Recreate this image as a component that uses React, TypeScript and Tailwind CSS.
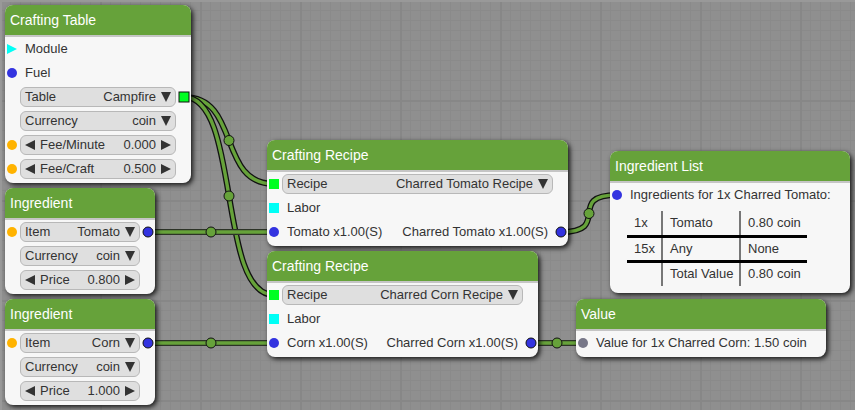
import { useId, type ReactNode } from "react";

type Shape = "circle" | "square" | "arrow";
type SlotProps = { color: string; shape?: Shape; linked?: boolean };

const BLUE = "#3333e0";
const AMBER = "#ffb300";
const LIME = "#00ff22";
const CYAN = "#00fff6";
const SLATE = "#777788";

function Slot({ slot, side }: { slot?: SlotProps; side: "in" | "out" }) {
  const cx = side === "in" ? 7 : 8;
  const stroke = slot?.linked ? "#111" : "none";
  return (
    <svg width="15" height="24" className="shrink-0" aria-hidden="true">
      {slot && (slot.shape ?? "circle") === "circle" && (
        <circle cx={cx} cy="12" r="5" fill={slot.color} stroke={stroke} />
      )}
      {slot?.shape === "square" && (
        <rect x={cx - 5} y="7" width="10" height="10" fill={slot.color} stroke={stroke} />
      )}
      {slot?.shape === "arrow" && (
        <path d={`M${cx - 5} 7L${cx + 5} 12L${cx - 5} 17Z`} fill={slot.color} />
      )}
    </svg>
  );
}

function Row({ input, output, children }: { input?: SlotProps; output?: SlotProps; children: ReactNode }) {
  return (
    <div className="flex h-6 items-center">
      <Slot slot={input} side="in" />
      <div className="flex min-w-0 flex-1 items-center">{children}</div>
      <Slot slot={output} side="out" />
    </div>
  );
}

function Labels({ left, right }: { left: string; right?: string }) {
  return (
    <div className="flex flex-1 justify-between whitespace-nowrap px-[5px]">
      <span>{left}</span>
      {right && <span>{right}</span>}
    </div>
  );
}

const box = "flex h-5 min-w-0 flex-1 items-center rounded-md border border-[#b8b8b8] bg-[#dfdfdf] px-1";

function Combo({ label, value }: { label: string; value: string }) {
  const id = useId();
  return (
    <div className={box}>
      <label htmlFor={id}>{label}</label>
      <select
        id={id}
        defaultValue={value}
        dir="rtl"
        className="mr-[5px] min-w-0 flex-1 appearance-none bg-transparent text-right outline-none"
      >
        <option>{value}</option>
      </select>
      <svg width="10" height="10" className="shrink-0 fill-[#333]" aria-hidden="true">
        <path d="M0 0H10L5 10Z" />
      </svg>
    </div>
  );
}

function NumberBox({ label, value }: { label: string; value: string }) {
  const id = useId();
  return (
    <div className={box}>
      <button type="button" aria-label={`Decrease ${label}`} className="shrink-0">
        <svg width="10" height="10" className="block fill-[#333]">
          <path d="M10 0V10L0 5Z" />
        </svg>
      </button>
      <label htmlFor={id} className="ml-[5px]">{label}</label>
      <input
        id={id}
        defaultValue={value}
        inputMode="decimal"
        className="mr-[5px] w-0 min-w-0 flex-1 bg-transparent text-right outline-none"
      />
      <button type="button" aria-label={`Increase ${label}`} className="shrink-0">
        <svg width="10" height="10" className="block fill-[#333]">
          <path d="M0 0V10L10 5Z" />
        </svg>
      </button>
    </div>
  );
}

function Node({ title, place, children }: { title: string; place: string; children: ReactNode }) {
  return (
    <section
      className={`absolute overflow-hidden rounded-lg bg-[#f7f7f7] pb-[2px] shadow-[2px_2px_5px_rgba(0,0,0,0.85)] ${place}`}
    >
      <h2 className="h-8 border-b-2 border-[#c5c5c5] bg-[#66a23a] px-[5px] text-sm leading-[30px] text-white">
        {title}
      </h2>
      {children}
    </section>
  );
}

type Point = [number, number];

const links: { from: Point; to: Point; bend: number }[] = [
  { from: [184, 97], to: [274, 184], bend: 57 },
  { from: [184, 97], to: [274, 295], bend: 57 },
  { from: [148, 232], to: [274, 232], bend: 30 },
  { from: [148, 343], to: [274, 343], bend: 30 },
  { from: [561, 232], to: [617, 195], bend: 52 },
  { from: [531, 343], to: [583, 343], bend: 12 },
];

function Links() {
  return (
    <svg className="absolute inset-0 size-full" aria-hidden="true">
      {links.map(({ from, to, bend }, i) => {
        const d = `M${from[0]} ${from[1]}C${from[0] + bend} ${from[1]} ${to[0] - bend} ${to[1]} ${to[0]} ${to[1]}`;
        const edge = from[1] === to[1] ? "#2c3327" : "#111";
        return (
          <g key={i} fill="none">
            <path d={d} stroke={edge} strokeWidth="6" />
            <path d={d} stroke="#66a23a" strokeWidth="3.4" />
            <circle
              cx={(from[0] + to[0]) / 2}
              cy={(from[1] + to[1]) / 2}
              r="5"
              fill="#66a23a"
              stroke="#111"
            />
          </g>
        );
      })}
    </svg>
  );
}

function Grid() {
  return (
    <svg className="absolute inset-0 size-full" aria-hidden="true">
      <defs>
        <pattern id="minor" width="10" height="10" patternUnits="userSpaceOnUse">
          <path d="M0 .5H10M.5 0V10" stroke="#8a8a8a" />
        </pattern>
        <pattern id="major" width="100" height="100" patternUnits="userSpaceOnUse">
          <path d="M0 1H100M1 0V100" stroke="#878787" strokeWidth="2" />
        </pattern>
      </defs>
      <rect width="100%" height="100%" fill="#8f8f8f" />
      <rect width="100%" height="100%" fill="url(#minor)" />
      <rect width="100%" height="100%" fill="url(#major)" />
      <path d="M0 0H4000V2H2V4000H0Z" fill="#999" />
    </svg>
  );
}

const cell = "h-[25px] whitespace-nowrap py-0 pr-0 pl-[7px] text-left font-normal";

export default function App() {
  return (
    <main className="relative h-screen min-h-[410px] w-full overflow-hidden bg-[#8f8f8f] font-['Liberation_Sans',Arial,sans-serif] text-[13px] leading-4 text-[#333]">
      <Grid />
      <Links />

      <Node title="Crafting Table" place="left-[5px] top-[5px] w-[186px]">
        <Row input={{ color: CYAN, shape: "arrow" }}><Labels left="Module" /></Row>
        <Row input={{ color: BLUE }}><Labels left="Fuel" /></Row>
        <Row output={{ color: LIME, shape: "square", linked: true }}><Combo label="Table" value="Campfire" /></Row>
        <Row><Combo label="Currency" value="coin" /></Row>
        <Row input={{ color: AMBER }}><NumberBox label="Fee/Minute" value="0.000" /></Row>
        <Row input={{ color: AMBER }}><NumberBox label="Fee/Craft" value="0.500" /></Row>
      </Node>

      <Node title="Ingredient" place="left-[5px] top-[188px] w-[150px]">
        <Row input={{ color: AMBER }} output={{ color: BLUE, linked: true }}><Combo label="Item" value="Tomato" /></Row>
        <Row><Combo label="Currency" value="coin" /></Row>
        <Row><NumberBox label="Price" value="0.800" /></Row>
      </Node>

      <Node title="Ingredient" place="left-[5px] top-[299px] w-[150px]">
        <Row input={{ color: AMBER }} output={{ color: BLUE, linked: true }}><Combo label="Item" value="Corn" /></Row>
        <Row><Combo label="Currency" value="coin" /></Row>
        <Row><NumberBox label="Price" value="1.000" /></Row>
      </Node>

      <Node title="Crafting Recipe" place="left-[267px] top-[140px] w-[301px]">
        <Row input={{ color: LIME, shape: "square" }}><Combo label="Recipe" value="Charred Tomato Recipe" /></Row>
        <Row input={{ color: CYAN, shape: "square" }}><Labels left="Labor" /></Row>
        <Row input={{ color: BLUE }} output={{ color: BLUE, linked: true }}>
          <Labels left="Tomato x1.00(S)" right="Charred Tomato x1.00(S)" />
        </Row>
      </Node>

      <Node title="Crafting Recipe" place="left-[267px] top-[251px] w-[271px]">
        <Row input={{ color: LIME, shape: "square" }}><Combo label="Recipe" value="Charred Corn Recipe" /></Row>
        <Row input={{ color: CYAN, shape: "square" }}><Labels left="Labor" /></Row>
        <Row input={{ color: BLUE }} output={{ color: BLUE, linked: true }}>
          <Labels left="Corn x1.00(S)" right="Charred Corn x1.00(S)" />
        </Row>
      </Node>

      <Node title="Ingredient List" place="left-[610px] top-[151px] w-[240px]">
        <Row input={{ color: BLUE }}><Labels left="Ingredients for 1x Charred Tomato:" /></Row>
        <table className="mt-1 mb-[5px] ml-[17px] w-[180px] table-fixed border-collapse">
          <colgroup>
            <col className="w-[35px]" />
            <col className="w-[78px]" />
            <col />
          </colgroup>
          <tbody className="[&_td+td]:border-l-2 [&_td+td]:border-l-[#777] [&_tr+tr]:border-t-[3px] [&_tr+tr]:border-t-black">
            <tr><td className={cell}>1x</td><td className={cell}>Tomato</td><td className={cell}>0.80 coin</td></tr>
            <tr><td className={cell}>15x</td><td className={cell}>Any</td><td className={cell}>None</td></tr>
            <tr><td className={cell} /><td className={cell}>Total Value</td><td className={cell}>0.80 coin</td></tr>
          </tbody>
        </table>
      </Node>

      <Node title="Value" place="left-[576px] top-[299px] w-[250px]">
        <Row input={{ color: SLATE }}><Labels left="Value for 1x Charred Corn: 1.50 coin" /></Row>
      </Node>
    </main>
  );
}
